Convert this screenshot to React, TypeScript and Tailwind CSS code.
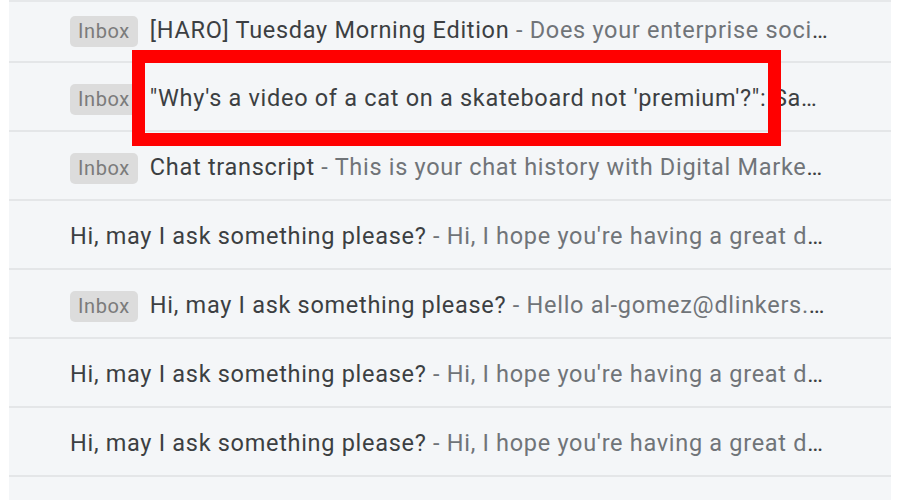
import React from 'react';

type Mail = { inbox: boolean; subject: string; snippet?: string };

const MAILS: Mail[] = [
  { inbox: true, subject: '[HARO] Tuesday Morning Edition', snippet: 'Does your enterprise social media team need help with its content strategy?' },
  { inbox: true, subject: '"Why\'s a video of a cat on a skateboard not \'premium\'?": Samantha explains the new rules' },
  { inbox: true, subject: 'Chat transcript', snippet: 'This is your chat history with Digital Marketing support' },
  { inbox: false, subject: 'Hi, may I ask something please?', snippet: "Hi, I hope you're having a great day today and wanted to ask" },
  { inbox: true, subject: 'Hi, may I ask something please?', snippet: 'Hello al-gomez@dlinkers.com, I came across your site' },
  { inbox: false, subject: 'Hi, may I ask something please?', snippet: "Hi, I hope you're having a great day today and wanted to ask" },
  { inbox: false, subject: 'Hi, may I ask something please?', snippet: "Hi, I hope you're having a great day today and wanted to ask" },
];

function MailRow({ mail, first }: { mail: Mail; first?: boolean }) {
  return (
    <div className={`flex items-center border-b-2 border-[#e4e6e8] pl-[61px] pr-[62px] ${first ? 'h-[61px] pb-[1px]' : 'h-[69px] pt-[5px]'}`}>
      {mail.inbox && (
        <span className="mr-[12px] flex h-[31px] shrink-0 items-center rounded-[5px] bg-[#dcdcdc] px-[8px] text-[20px] tracking-[0.6px] text-[#7b7b7b]">Inbox</span>
      )}
      <span className="min-w-0 truncate text-[23.5px] tracking-[0.7px] text-[#3c3f42]">
        {mail.subject}
        {mail.snippet && <span className="text-[#707478]"> - {mail.snippet}</span>}
      </span>
    </div>
  );
}

export default function App() {
  return (
    <div className="relative h-[500px] w-[900px] overflow-hidden bg-white" style={{ fontFamily: 'Roboto, "Liberation Sans", sans-serif' }}>
      <div className="ml-[9px] h-full w-[882px] border-t-2 border-[#e6e8ea] bg-[#f4f6f8]">
        {MAILS.map((m, i) => (
          <MailRow key={i} mail={m} first={i === 0} />
        ))}
      </div>

      {/* highlight box */}
      <div className="absolute left-[132px] top-[50px] h-[96px] w-[649px] border-[13px] border-[#ff0000]" />
    </div>
  );
}
